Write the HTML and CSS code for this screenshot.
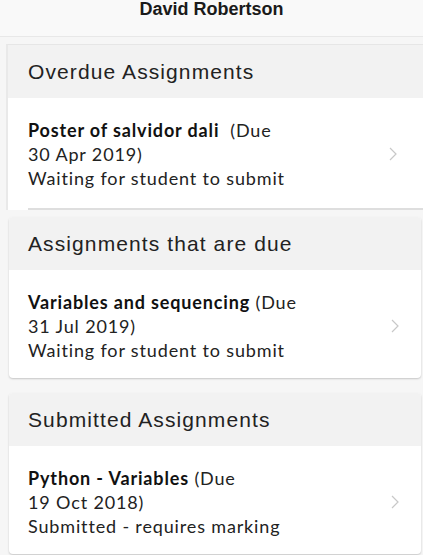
FILE: index.html
```html
<!DOCTYPE html>
<html>
<head>
<meta charset="utf-8">
<link rel="stylesheet" href="styles.css">
</head>
<body>
<header class="topbar">David Robertson</header>
<main class="content">
  <section class="card card-shifted">
    <h2 class="card-head">Overdue Assignments</h2>
    <div class="item item-sep">
      <div class="item-text">
        <b>Poster of salvidor dali</b>&nbsp; (Due<br>30 Apr 2019)<br>Waiting for student to submit
      </div>
      <svg class="chev" width="8" height="14" viewBox="0 0 8 14"><path d="M1 1l6 6-6 6" fill="none" stroke="#c8c8c8" stroke-width="1.2"/></svg>
    </div>
  </section>
  <section class="card">
    <h2 class="card-head">Assignments that are due</h2>
    <div class="item">
      <div class="item-text">
        <b>Variables and sequencing</b> (Due<br>31 Jul 2019)<br>Waiting for student to submit
      </div>
      <svg class="chev" width="8" height="14" viewBox="0 0 8 14"><path d="M1 1l6 6-6 6" fill="none" stroke="#c8c8c8" stroke-width="1.2"/></svg>
    </div>
  </section>
  <section class="card">
    <h2 class="card-head">Submitted Assignments</h2>
    <div class="item">
      <div class="item-text">
        <b>Python - Variables</b> (Due<br>19 Oct 2018)<br>Submitted - requires marking
      </div>
      <svg class="chev" width="8" height="14" viewBox="0 0 8 14"><path d="M1 1l6 6-6 6" fill="none" stroke="#c8c8c8" stroke-width="1.2"/></svg>
    </div>
  </section>
</main>
</body>
</html>
```
FILE: styles.css
```css
html, body {
  margin: 0;
  padding: 0;
}
body {
  width: 423px;
  height: 555px;
  overflow: hidden;
  background: #f6f6f6;
  font-family: Lato, "Open Sans", sans-serif;
  color: #222;
}
.topbar {
  height: 36px;
  background: #f9f9f9;
  border-bottom: 1px solid #e8e8e8;
  text-align: center;
  font-family: "Liberation Sans", Arial, sans-serif;
  font-weight: bold;
  font-size: 18px;
  line-height: 19px;
  color: #1a1a1a;
}
.content {
  display: flex;
  flex-direction: column;
  gap: 15px;
  padding: 7px 2px 0 9px;
}
.card {
  background: #fff;
  border-radius: 4px;
  box-shadow: 0 1px 2px rgba(0,0,0,0.2);
  overflow: hidden;
}
.card-shifted {
  margin-left: -3px;
  margin-right: -12px;
  border-radius: 0;
  box-shadow: none;
  border-left: 2px solid #e9e9e9;
  border-top: 1px solid #e6e6e6;
  margin-bottom: -8px;
}
.card-head {
  margin: 0;
  background: #f2f2f2;
  height: 53px;
  display: flex;
  align-items: center;
  padding-left: 19px;
  font-family: "Liberation Sans", Arial, sans-serif;
  font-weight: normal;
  font-size: 21px;
  letter-spacing: 1.1px;
  color: #222;
}
.card-shifted .card-head { padding-left: 20px; }
.item {
  display: flex;
  align-items: center;
  justify-content: space-between;
  padding: 20px 22px 16px 19px;
}
.card-shifted .item { padding-left: 20px; }
.item-sep {
  position: relative;
  padding-bottom: 20px;
}
.item-sep::after {
  content: "";
  position: absolute;
  left: 20px;
  right: 0;
  bottom: 0;
  border-bottom: 2px solid #dedede;
}
.item-text {
  font-size: 18px;
  line-height: 24px;
  letter-spacing: 0.85px;
  color: #222;
}
.item-text b { font-weight: bold; color: #111; }
.chev { flex: none; }
.card-shifted .chev { margin-right: 14px; }
```
